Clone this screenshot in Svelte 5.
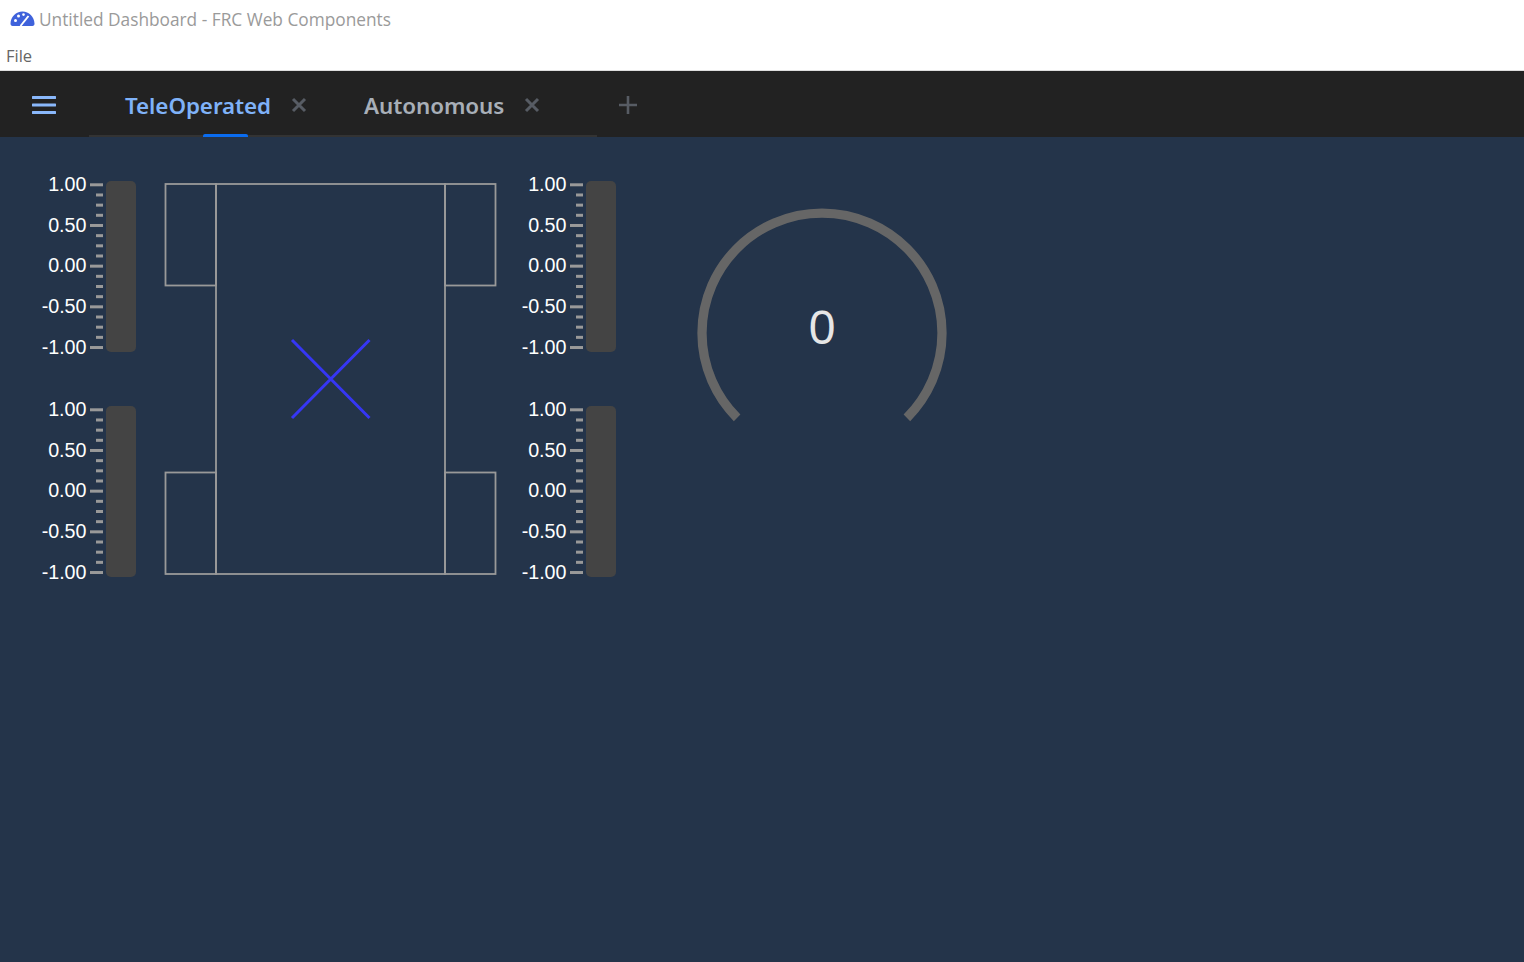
<script lang="ts">
  const labels = ['1.00', '0.50', '0.00', '-0.50', '-1.00'];
  const ticks = Array.from({ length: 17 }, (_, i) => i);
  const tabs = [
    { name: 'TeleOperated', active: true },
    { name: 'Autonomous', active: false },
  ];
  const step = 10.17;
</script>

{#snippet bar()}
  <div class="bar-widget">
    <svg class="axis" width="66" height="171" viewBox="0 0 66 171">
      {#each ticks as i}
        <rect
          x={i % 4 === 0 ? 50 : 56}
          y={2.3 + i * step}
          width={i % 4 === 0 ? 13 : 7}
          height="3"
          fill="#999"
        />
      {/each}
      {#each labels as label, i}
        <text x="46.5" y={10 + i * 40.7} text-anchor="end">{label}</text>
      {/each}
    </svg>
    <div class="bar"></div>
  </div>
{/snippet}

<div class="titlebar">
  <svg class="logo" width="25" height="16" viewBox="0 0 25 16">
    <path
      d="M12.5 0.5C6 0.5 0.8 5.6 0.5 12.5C0.5 14 1.2 15 2.6 15H22.4C23.8 15 24.6 14 24.5 12.5C24.2 5.6 19 0.5 12.5 0.5Z"
      fill="#3f62db"
    />
    <circle cx="5.5" cy="9.5" r="1.5" fill="#fff" />
    <circle cx="8.5" cy="5" r="1.5" fill="#fff" />
    <circle cx="13.5" cy="3.6" r="1.3" fill="#fff" />
    <path d="M10.5 15L18.5 5" stroke="#fff" stroke-width="2" fill="none" />
  </svg>
  <span>Untitled Dashboard - FRC Web Components</span>
</div>
<div class="menubar">File</div>

<header class="tabbar">
  <svg class="menu-icon" width="24" height="18" viewBox="0 0 24 18">
    <path d="M1 1.5H23M1 9H23M1 16.5H23" stroke="#8ab8fb" stroke-width="3" stroke-linecap="round" />
  </svg>
  <nav class="tabs">
    {#each tabs as tab}
      <div class="tab" class:active={tab.active}>
        <span class="tab-label">{tab.name}</span>
        <svg class="close" width="16" height="16" viewBox="0 0 16 16">
          <path d="M2 2L14 14M14 2L2 14" stroke="#575c64" stroke-width="3" />
        </svg>
      </div>
    {/each}
  </nav>
  <svg class="plus" width="18" height="18" viewBox="0 0 18 18">
    <path d="M9 0V18M0 9H18" stroke="#575c64" stroke-width="2.6" />
  </svg>
</header>

<main class="dashboard">
  <div class="bar-column">
    {@render bar()}
    {@render bar()}
  </div>

  <svg class="drivetrain" width="340" height="396" viewBox="0 0 340 396">
    <g fill="none" stroke="#999" stroke-width="1.8">
      <rect x="56" y="3" width="229" height="390" />
      <rect x="5.5" y="3" width="50.5" height="101.5" />
      <rect x="285" y="3" width="50.5" height="101.5" />
      <rect x="5.5" y="291.5" width="50.5" height="101.5" />
      <rect x="285" y="291.5" width="50.5" height="101.5" />
    </g>
    <path d="M132 159L209.5 237M209.5 159L132 237" stroke="#3636f5" stroke-width="3" fill="none" />
  </svg>

  <div class="bar-column">
    {@render bar()}
    {@render bar()}
  </div>

  <div class="gauge">
    <svg width="260" height="230" viewBox="0 0 260 230">
      <path
        d="M45.1 218.9A120 120 0 1 1 214.9 218.9"
        fill="none"
        stroke="#666"
        stroke-width="9.3"
      />
    </svg>
    <span class="gauge-value">0</span>
  </div>
</main>

<style>
  :global(body) {
    background: #fff;
  }
  .titlebar {
    display: flex;
    align-items: center;
    gap: 4px;
    height: 42px;
    padding: 0 0 4px 10px;
    box-sizing: border-box;
    font: 17.3px "Open Sans", sans-serif;
    color: #9a9a9a;
    white-space: nowrap;
  }
  .menubar {
    height: 29px;
    padding: 2px 0 0 6px;
    box-sizing: border-box;
    font: 16.5px "Open Sans", sans-serif;
    color: #666;
    border-bottom: 1px solid #ddd;
  }
  .tabbar {
    display: flex;
    align-items: stretch;
    height: 66px;
    background: #222;
  }
  .menu-icon {
    margin: 25px 33px 0 32px;
    flex: none;
  }
  .tabs {
    display: flex;
    padding-right: 36px;
    border-bottom: 2px solid #333;
    height: 64px;
  }
  .tab {
    position: relative;
    display: flex;
    align-items: center;
    gap: 20px;
    padding: 4px 21px 0 36px;
    font: 600 22.4px "Noto Sans", sans-serif;
    letter-spacing: -0.08px;
    color: #a8afb8;
    white-space: nowrap;
  }
  .tab.active {
    color: #7fb2f8;
  }
  .tab.active::after {
    content: "";
    position: absolute;
    left: 114px;
    bottom: -2px;
    width: 45px;
    height: 3px;
    border-radius: 2px 2px 0 0;
    background: #0a6cf0;
  }
  .plus {
    margin: 25px 0 0 22px;
  }
  .dashboard {
    display: flex;
    align-items: flex-start;
    height: 825px;
    padding: 44px 0 0 40px;
    box-sizing: border-box;
    background: #24344a;
    overflow: hidden;
  }
  .bar-column {
    display: flex;
    flex-direction: column;
    gap: 54px;
  }
  .bar-widget {
    display: flex;
    height: 171px;
  }
  .axis {
    overflow: visible;
  }
  .axis text {
    font: 19.7px "Liberation Sans", Arial, sans-serif;
    fill: #fff;
  }
  .bar {
    width: 29.5px;
    border-radius: 5px;
    background: #444;
  }
  .drivetrain {
    margin: 0 20.5px 0 24px;
  }
  .gauge {
    position: relative;
    margin: 18px 0 0 76.5px;
  }
  .gauge svg {
    display: block;
  }
  .gauge-value {
    position: absolute;
    left: 0;
    right: 0;
    top: 101px;
    text-align: center;
    font: 48px "Liberation Sans", Arial, sans-serif;
    color: #e6e6e6;
  }
</style>
